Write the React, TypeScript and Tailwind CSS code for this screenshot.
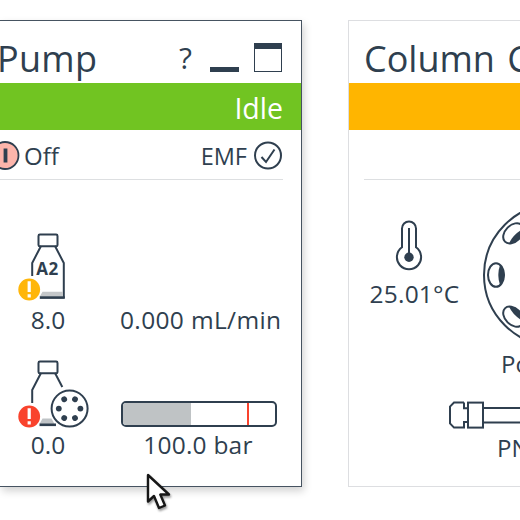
import React from "react";

const INK = "#2f3f4f";

function Bottle({ label, alert, valve }: { label?: string; alert: string; valve?: boolean }) {
  return (
    <svg width="80" height="74" viewBox="0 0 80 74" className="block" fill="none" stroke={INK} strokeWidth="2">
      <rect x="23.5" y="5.5" width="19" height="11.8" rx="1.4" />
      <path d="M26 17 L17.2 34 V47" />
      {valve ? <path d="M40 17 L47.3 31" /> : <path d="M40 17 L48.8 34 V69" />}
      {valve ? (
        <path d="M27.5 62.5 H36.5 L39.5 68 H24.5 Z" fill="#bfc3c6" stroke="none" />
      ) : (
        <path d="M27.5 62.8 H48 V68 H24.5 Z" fill="#c4c7c9" stroke="none" />
      )}
      <path d={valve ? "M24.5 68.8 H41" : "M24.8 68.6 H49.8"} strokeWidth="2.6" />
      {label && (
        <text x="32.4" y="46" textAnchor="middle" fontSize="17" fontWeight="700" letterSpacing="0.5" fill={INK} stroke="none" className="font-['Open_Sans',sans-serif]">
          {label}
        </text>
      )}
      {valve && (
        <g>
          <circle cx="54.6" cy="52.6" r="18" fill="#fff" />
          {[0, 60, 120, 180, 240, 300].map((a) => (
            <circle key={a} cx="65.4" cy="52.6" r="2.9" fill={INK} stroke="none" transform={`rotate(${a} 54.6 52.6)`} />
          ))}
        </g>
      )}
      <circle cx="14.2" cy="60.5" r="10.9" fill={alert} stroke="none" />
      <path d="M14.2 52.2 V63 M14.2 65.2 V68.4" stroke="#fff" strokeWidth="3.2" />
    </svg>
  );
}

function Thermometer() {
  return (
    <svg width="28" height="54" viewBox="0 0 28 54" className="mr-[13px] block" fill="none" stroke={INK} strokeWidth="2">
      <path d="M7 28.3 V9.5 A7 7 0 0 1 21 9.5 V28.3 A12.1 12.1 0 1 1 7 28.3 Z" />
      <path d="M14 9 V38" />
      <circle cx="14" cy="38.3" r="4.7" fill={INK} stroke="none" />
    </svg>
  );
}

function Carousel() {
  return (
    <svg width="146" height="146" viewBox="0 0 146 146" className="block shrink-0" fill="none" stroke={INK} strokeWidth="2">
      <circle cx="73" cy="73" r="71" />
      {[0, 45, 90, 135, 180, 225, 270, 315].map((a) => (
        <g key={a} transform={`rotate(${a} 73 73)`}>
          <ellipse cx="14" cy="73" rx="8" ry="11.8" />
          <path d="M18 63 Q14.6 73 18 83 Q22.4 80 22.4 73 Q22.4 66 18 63Z" fill={INK} stroke="none" />
        </g>
      ))}
    </svg>
  );
}

function ColumnIcon() {
  return (
    <svg width="140" height="30" viewBox="0 0 140 30" className="block shrink-0" fill="none" stroke={INK} strokeWidth="2">
      <path d="M16 2.6 H6 L2 6.6 V23.4 L6 27.6 H16 V22 H20 M16 2.6 V8.2 H20" />
      <rect x="20" y="2.6" width="15" height="25" />
      <path d="M35 8 H140 M35 22.5 H140" />
    </svg>
  );
}

export default function App() {
  return (
    <div className="relative flex h-[520px] w-[520px] overflow-hidden bg-white pt-[20px] font-['Open_Sans',sans-serif] text-[24px] leading-[30px] text-[#2f3f4f]">
      <section className="h-[467px] w-[302px] shrink-0 border-t border-r border-b border-[#465361] bg-white shadow-[2px_4px_8px_rgba(0,0,0,0.18)]">
        <header className="flex h-[62px] items-center justify-between pr-[19px]">
          <h1 className="-ml-[3px] pt-[14px] text-[36px] leading-[40px] tracking-[0.3px]">Pump</h1>
          <div className="flex items-end pt-[11px]">
            <span className="mr-[18px] text-[30px] leading-[30px]">?</span>
            <span className="mr-[15px] mb-[1px] h-[5px] w-[29px] bg-[#2f3f4f]" />
            <span className="mb-[1px] h-[29px] w-[28px] border border-t-[6px] border-[#2f3f4f]" />
          </div>
        </header>
        <div className="flex h-[47px] items-center justify-end bg-[#71c422] pt-[2px] pr-[18px] text-[28.5px] font-medium text-white">Idle</div>
        <div className="mr-[18px] flex h-[50px] items-center border-b border-[#dddfe1]">
          <svg width="20" height="30" viewBox="0 0 20 30" className="block">
            <circle cx="5" cy="15.5" r="13.5" fill="#fdb5ab" stroke={INK} strokeWidth="1.8" />
            <path d="M5.5 8.5 V22.5" stroke={INK} strokeWidth="3.8" />
          </svg>
          <span className="ml-[4px] pt-[3px]">Off</span>
          <span className="mr-[6px] ml-auto pt-[3px] text-[23.5px]">EMF</span>
          <svg width="30" height="30" viewBox="0 0 30 30" className="block" fill="none" stroke={INK} strokeWidth="2">
            <circle cx="15" cy="15.5" r="13" />
            <path d="M8.5 17 L13 22 L21.5 9.5" />
          </svg>
        </div>
        <div className="flex h-[154px] pt-[49px] pl-[15px]">
          <div className="w-[66px] shrink-0">
            <Bottle label="A2" alert="#ffb60a" />
            <p className="mt-[2px] text-center text-[24.5px]">8.0</p>
          </div>
          <p className="mt-[76px] ml-[39px] text-[24.5px] tracking-[0.35px] whitespace-nowrap">0.000 mL/min</p>
        </div>
        <div className="flex h-[126px] pt-[22px] pl-[15px]">
          <div className="w-[66px] shrink-0">
            <Bottle alert="#f9432d" valve />
            <p className="mt-0 text-center text-[24.5px]">0.0</p>
          </div>
          <div className="ml-[40px] w-[156px] pt-[45px]">
            <div className="flex h-[26px] rounded-[5px] border-2 border-[#2f3f4f]">
              <span className="w-[68px] rounded-l-[3px] bg-[#bfc3c5]" />
              <span className="ml-[56px] w-[2px] bg-[#f9432d]" />
            </div>
            <p className="mt-[3px] -ml-[2px] text-center text-[24.5px] tracking-[0.2px] whitespace-nowrap">100.0 bar</p>
          </div>
        </div>
      </section>

      <section className="ml-[46px] h-[467px] w-[320px] shrink-0 border border-[#dddee1] bg-white">
        <header className="h-[62px] pt-[18px] pl-[15px] text-[36px] leading-[40px] [word-spacing:3px] whitespace-nowrap">Column Comp.</header>
        <div className="h-[47px] bg-[#ffb500]" />
        <div className="ml-[15px] h-[50px] border-b border-[#dddfe1]" />
        <div className="flex h-[200px] pt-[22px]">
          <div className="flex w-[132px] shrink-0 flex-col items-center pt-[17px]">
            <Thermometer />
            <p className="mt-[6px] -ml-[1px] text-[24.5px] tracking-[0.2px]">25.01°C</p>
          </div>
          <div className="ml-[1px]">
            <Carousel />
            <p className="mt-[1px] ml-[19px] whitespace-nowrap">Pos 1</p>
          </div>
        </div>
        <div className="pt-[20px] pl-[99px]">
          <ColumnIcon />
          <p className="mt-[3px] ml-[49px]">PN</p>
        </div>
      </section>

      <svg width="34" height="44" viewBox="0 0 34 44" className="absolute top-[470px] left-[143px] drop-shadow-[1px_2px_1px_rgba(0,0,0,0.4)]">
        <path d="M5 5 V31.5 L11 26 L16 38 L22 35.5 L17.3 24.5 H26 Z" fill="#fff" stroke="#171717" strokeWidth="2.4" strokeLinejoin="round" />
      </svg>
    </div>
  );
}
